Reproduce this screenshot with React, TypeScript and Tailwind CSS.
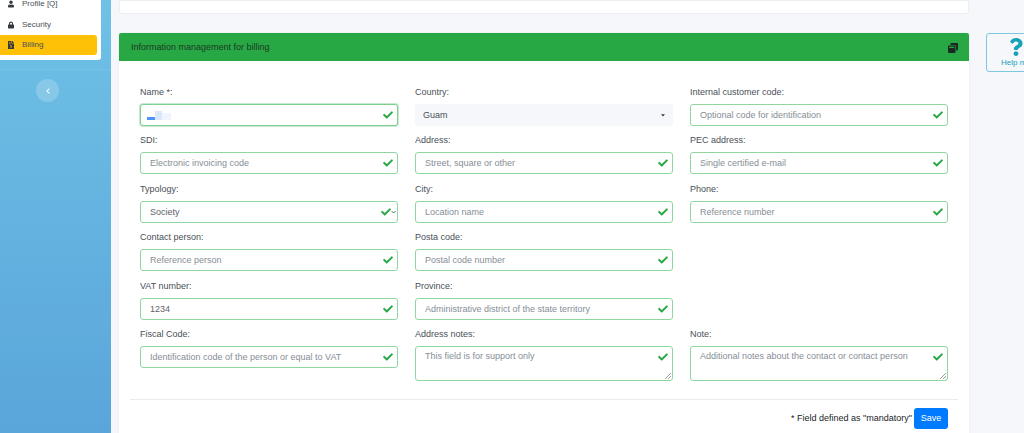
import { FaUser, FaLock, FaFileInvoiceDollar, FaWindowRestore, FaQuestion, FaCheck, FaChevronLeft, FaCaretDown } from "react-icons/fa";

const border = "border border-[#8fd6a0] rounded-[3px] bg-white";

function Check({ className = "right-[4px] top-[5px]" }: { className?: string }) {
  return <FaCheck className={`absolute text-[#28a745] w-[10px] h-[10px] ${className}`} />;
}

function Label({ children }: { children: React.ReactNode }) {
  return <label className="block h-[14px] leading-[14px] mb-[5px] text-[#495057]">{children}</label>;
}

function Field({ label, placeholder, value }: { label: string; placeholder?: string; value?: string }) {
  return (
    <div>
      <Label>{label}</Label>
      <div className={`relative h-[22px] ${border} pl-[9px] pr-6 leading-[20px] whitespace-nowrap ${value ? "text-[#5c636a]" : "text-[#868e96]"}`}>
        {value ?? placeholder}
        <Check />
      </div>
    </div>
  );
}

function Area({ label, placeholder }: { label: string; placeholder: string }) {
  return (
    <div>
      <Label>{label}</Label>
      <div className={`relative h-[35px] ${border} pl-[9px] pr-6 pt-[1px] leading-[16px] text-[#868e96] whitespace-nowrap`}>
        {placeholder}
        <Check />
        <svg className="absolute right-[1px] bottom-[1px] w-[6px] h-[6px]" viewBox="0 0 6 6">
          <path d="M6 0 L0 6 M6 3 L3 6" stroke="#888" strokeWidth="0.8" />
        </svg>
      </div>
    </div>
  );
}

function MenuItem({ icon, text, active }: { icon: React.ReactNode; text: string; active?: boolean }) {
  return (
    <div className={`flex items-center shrink-0 h-[20px] w-[97px] rounded-r-[3px] pl-[8px] gap-[8px] text-[8px] text-[#495057] ${active ? "bg-[#ffc107]" : ""}`}>
      <span className="w-[6px] flex justify-center text-[#343a40]">{icon}</span>
      <span>{text}</span>
    </div>
  );
}

export default function App() {
  return (
    <div className="flex h-[433px] w-[1024px] overflow-hidden bg-[#f6f7fb] text-[9px]" style={{ fontFamily: '"Liberation Sans", Arial, sans-serif' }}>
      <aside className="w-[111px] shrink-0 h-full bg-gradient-to-b from-[#6fc1e6] to-[#5aa5da]">
        <nav className="w-[101px] h-[60px] bg-white rounded-br-[3px] flex flex-col gap-[0.5px] overflow-hidden justify-end pb-[5px]">
          <MenuItem icon={<FaUser className="w-[8px] h-[8px]" />} text="Profile [Q]" />
          <MenuItem icon={<FaLock className="w-[8px] h-[8px]" />} text="Security" />
          <MenuItem icon={<FaFileInvoiceDollar className="w-[7px] h-[8px]" />} text="Billing" active />
        </nav>
        <div className="mt-[9px] border-t border-[#76c3e6]" />
        <div className="mt-[9px] ml-[36px] w-[23px] h-[23px] rounded-full bg-white/20 flex items-center justify-center">
          <FaChevronLeft className="w-[6px] h-[6px] text-white" />
        </div>
      </aside>
      <main className="flex-1 flex min-w-0 pl-[8px] gap-[18px]">
        <div className="w-[850px] shrink-0 flex flex-col gap-[19px]">
          <div className="h-[14px] bg-white border border-[#eceef3] rounded-b-[3px]" />
          <section className="bg-white flex-1 shadow-[0_0_2px_rgba(0,0,0,0.08)]">
            <header className="h-[28px] bg-[#28a745] rounded-t-[2px] flex items-center justify-between pl-[12px] pr-[11px] pt-[1px] text-[#1c3a23]">
              <span>Information management for billing</span>
              <FaWindowRestore className="w-[10px] h-[10px] text-[#1b2a20]" />
            </header>
            <div className="px-[21px] pt-[23.75px]">
              <div className="grid grid-cols-[258px_258px_258px] gap-x-[17px] gap-y-[7.5px] items-start">
                <div>
                  <Label>Name *:</Label>
                  <div className="relative h-[22px] border border-[#7fd093] rounded-[3px] bg-white shadow-[0_0_0_1px_rgba(40,167,69,0.25)] pl-[9px]">
                    <div className="absolute left-[6px] top-[5px] w-[24px] h-[10px] flex items-end">
                      <span className="w-[8px] h-[3px] bg-[#4d94ff]" />
                      <span className="w-[7px] h-[9px] bg-[#dbe7fb]" />
                      <span className="w-[9px] h-[7px] bg-[#f0f4fd]" />
                    </div>
                    <Check />
                  </div>
                </div>
                <div>
                  <Label>Country:</Label>
                  <div className="relative h-[22px] rounded-[3px] bg-[#f6f7fb] pl-[8px] leading-[22px] text-[#495057]">
                    Guam
                    <FaCaretDown className="absolute right-[7px] top-[8px] w-[6px] h-[6px] text-[#343a40]" />
                  </div>
                </div>
                <Field label="Internal customer code:" placeholder="Optional code for identification" />

                <Field label="SDI:" placeholder="Electronic invoicing code" />
                <Field label="Address:" placeholder="Street, square or other" />
                <Field label="PEC address:" placeholder="Single certified e-mail" />

                <div>
                  <Label>Typology:</Label>
                  <div className={`relative h-[22px] ${border} pl-[9px] leading-[20px] text-[#5c636a]`}>
                    Society
                    <Check className="right-[6px] top-[5px]" />
                    <svg className="absolute right-[1px] top-[8px] w-[5px] h-[4px]" viewBox="0 0 5 4">
                      <path d="M0.5 1 L2.5 3 L4.5 1" stroke="#444" strokeWidth="0.8" fill="none" />
                    </svg>
                  </div>
                </div>
                <Field label="City:" placeholder="Location name" />
                <Field label="Phone:" placeholder="Reference number" />

                <Field label="Contact person:" placeholder="Reference person" />
                <Field label="Posta code:" placeholder="Postal code number" />
                <div />

                <Field label="VAT number:" value="1234" />
                <Field label="Province:" placeholder="Administrative district of the state territory" />
                <div />

                <Field label="Fiscal Code:" placeholder="Identification code of the person or equal to VAT" />
                <Area label="Address notes:" placeholder="This field is for support only" />
                <Area label="Note:" placeholder="Additional notes about the contact or contact person" />
              </div>
              <div className="mt-[18px] -mx-[10px] border-t border-[#e9ecef]" />
              <div className="mt-[8px] flex justify-end items-center gap-[2px] text-[#212529]">
                <span>* Field defined as "mandatory"</span>
                <span className="h-[21px] w-[34px] rounded-[3px] bg-[#007bff] text-white flex items-center justify-center">Save</span>
              </div>
            </div>
          </section>
        </div>
        <div className="mt-[33px] h-[39px] w-[60px] shrink-0 -ml-[1px] border border-[#7cc8dc] rounded-[3px] flex flex-col items-center bg-[#f6f7fb]">
          <FaQuestion className="w-[14px] h-[18px] mt-[4px] text-[#17a2b8]" />
          <span className="text-[8px] leading-[10px] mt-[2px] text-[#17a2b8] whitespace-nowrap">Help me</span>
        </div>
      </main>
    </div>
  );
}
